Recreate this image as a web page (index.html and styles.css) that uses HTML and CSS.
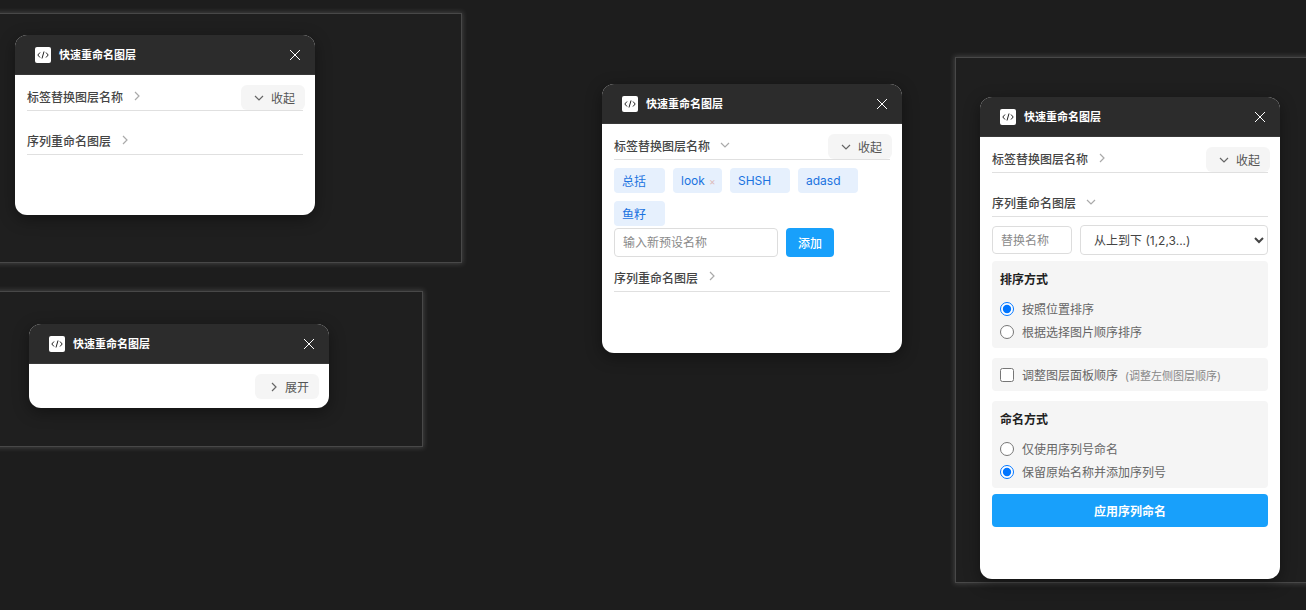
FILE: index.html
```html
<!DOCTYPE html>
<html lang="zh">
<head>
<meta charset="utf-8">
<title>快速重命名图层</title>
<link rel="stylesheet" href="styles.css">
</head>
<body>
<svg class="sprite" width="0" height="0" aria-hidden="true">
  <symbol id="logo" viewBox="0 0 16 16"><path d="M5 5.5 2.8 8 5 10.5M11 5.5 13.2 8 11 10.5M9 4.5 7 11.5" fill="none" stroke="#222" stroke-width="1"/></symbol>
  <symbol id="close" viewBox="0 0 12 12"><path d="M1 1 11 11M11 1 1 11" fill="none" stroke="#fff" stroke-width="1"/></symbol>
  <symbol id="right" viewBox="0 0 8 10"><path d="M2 1 6 5 2 9" fill="none" stroke="currentColor" stroke-width="1.2"/></symbol>
  <symbol id="down" viewBox="0 0 10 8"><path d="M1 2 5 6 9 2" fill="none" stroke="currentColor" stroke-width="1.2"/></symbol>
</svg>

<div class="frame frame-a"></div>
<div class="frame frame-b"></div>
<div class="frame frame-c"></div>

<section class="panel panel-a">
  <header class="head"><span class="logo"><svg width="16" height="16"><use href="#logo"/></svg></span><h1>快速重命名图层</h1><svg class="x" width="12" height="12"><use href="#close"/></svg></header>
  <button class="fold"><svg class="fold-ic" width="10" height="8"><use href="#down"/></svg>收起</button>
  <div class="body">
    <div class="title">标签替换图层名称<svg class="chev" width="8" height="10"><use href="#right"/></svg></div>
    <div class="title">序列重命名图层<svg class="chev" width="8" height="10"><use href="#right"/></svg></div>
  </div>
</section>

<section class="panel panel-b">
  <header class="head"><span class="logo"><svg width="16" height="16"><use href="#logo"/></svg></span><h1>快速重命名图层</h1><svg class="x" width="12" height="12"><use href="#close"/></svg></header>
  <button class="fold"><svg class="fold-ic" width="8" height="10"><use href="#right"/></svg>展开</button>
</section>

<section class="panel panel-c">
  <header class="head"><span class="logo"><svg width="16" height="16"><use href="#logo"/></svg></span><h1>快速重命名图层</h1><svg class="x" width="12" height="12"><use href="#close"/></svg></header>
  <button class="fold"><svg class="fold-ic" width="10" height="8"><use href="#down"/></svg>收起</button>
  <div class="body">
    <div class="title">标签替换图层名称<svg class="chev" width="10" height="8"><use href="#down"/></svg></div>
    <div class="tags">
      <span class="tag w51">总括</span>
      <span class="tag w49">look<i class="del">×</i></span>
      <span class="tag w60">SHSH</span>
      <span class="tag w60">adasd</span>
      <span class="tag w51">鱼籽</span>
    </div>
    <div class="add">
      <input class="field preset" placeholder="输入新预设名称">
      <button class="primary small">添加</button>
    </div>
    <div class="title after-add">序列重命名图层<svg class="chev" width="8" height="10"><use href="#right"/></svg></div>
  </div>
</section>

<section class="panel panel-d">
  <header class="head"><span class="logo"><svg width="16" height="16"><use href="#logo"/></svg></span><h1>快速重命名图层</h1><svg class="x" width="12" height="12"><use href="#close"/></svg></header>
  <button class="fold"><svg class="fold-ic" width="10" height="8"><use href="#down"/></svg>收起</button>
  <div class="body">
    <div class="title">标签替换图层名称<svg class="chev" width="8" height="10"><use href="#right"/></svg></div>
    <div class="title">序列重命名图层<svg class="chev" width="10" height="8"><use href="#down"/></svg></div>
    <div class="seq">
      <input class="field short" placeholder="替换名称">
      <select class="pick"><option>从上到下 (1,2,3...)</option></select>
    </div>
    <div class="group first">
      <div class="group-title">排序方式</div>
      <label class="opt"><input type="radio" name="s" checked>按照位置排序</label>
      <label class="opt"><input type="radio" name="s">根据选择图片顺序排序</label>
    </div>
    <div class="group check">
      <label class="opt"><input type="checkbox">调整图层面板顺序<small>(调整左侧图层顺序)</small></label>
    </div>
    <div class="group">
      <div class="group-title">命名方式</div>
      <label class="opt"><input type="radio" name="n">仅使用序列号命名</label>
      <label class="opt"><input type="radio" name="n" checked>保留原始名称并添加序列号</label>
    </div>
    <button class="primary wide">应用序列命名</button>
  </div>
</section>
</body>
</html>
```
FILE: styles.css
```css
* { box-sizing: border-box; }
html, body { margin: 0; height: 100%; overflow: hidden; }
body {
  position: relative;
  width: 1306px;
  height: 610px;
  background: #1d1d1d;
  font-family: Inter, "Noto Sans CJK SC", sans-serif;
  font-size: 12px;
  color: #333;
}
.sprite { position: absolute; }

.frame {
  position: absolute;
  background: #1f1f1f;
  border: 1px solid #484848;
  box-shadow: 0 0 5px 1px rgba(255, 255, 255, .16);
}
.frame-a { left: -20px; top: 13px; width: 482px; height: 250px; }
.frame-b { left: -20px; top: 291px; width: 443px; height: 156px; }
.frame-c { left: 955px; top: 57px; width: 400px; height: 526px; }

.panel {
  position: absolute;
  width: 300px;
  background: #fff;
  border-radius: 12px;
  overflow: hidden;
  box-shadow: 0 4px 16px rgba(0, 0, 0, .4);
}
.panel-a { left: 15px; top: 35px; height: 180px; }
.panel-b { left: 29px; top: 324px; height: 84px; }
.panel-c { left: 602px; top: 84px; height: 269px; }
.panel-d { left: 980px; top: 97px; height: 482px; }

.head {
  display: flex;
  align-items: center;
  height: 40px;
  padding: 0 14px 0 20px;
  background: #2c2c2c;
  border-bottom: 1px solid #383838;
}
.head h1 {
  flex: 1;
  margin: 0 0 1px 8px;
  font-size: 11px;
  font-weight: 700;
  color: #fff;
}
.logo {
  display: flex;
  align-items: center;
  justify-content: center;
  width: 16px;
  height: 16px;
  background: #fff;
  border-radius: 2px;
}

.fold {
  position: absolute;
  right: 10px;
  top: 50px;
  display: flex;
  align-items: center;
  justify-content: flex-end;
  width: 64px;
  height: 25px;
  padding: 0 10px 0 0;
  border: 0;
  border-radius: 6px;
  background: #f5f5f5;
  font: inherit;
  font-size: 12px;
  color: #555;
}
.fold-ic { margin-right: 7px; color: #666; }

.body { padding: 0 12px; }
.title {
  display: flex;
  align-items: center;
  height: 36px;
  padding-top: 8px;
  border-bottom: 1px solid #e0e0e0;
  font-size: 12px;
  font-weight: 500;
  color: #444;
}
.title + .title { height: 44px; padding-top: 16px; padding-bottom: 0; }
.chev { margin-left: 10px; margin-bottom: 2px; color: #aaa; }

.tags {
  display: flex;
  flex-wrap: wrap;
  gap: 8px;
  margin-top: 8px;
}
.tag {
  display: flex;
  align-items: center;
  height: 25px;
  padding-left: 8px;
  background: #e6f0fd;
  border-radius: 4px;
  font-size: 12px;
  color: #1b73e0;
}
.w51 { width: 51px; }
.w49 { width: 49px; }
.w60 { width: 60px; }
.del { margin-left: 4px; font-style: normal; font-size: 10px; color: #dbb; }

.add { display: flex; gap: 8px; margin-top: 2px; }
.field {
  height: 29px;
  padding: 0 8px;
  border: 1px solid #ddd;
  border-radius: 4px;
  background: #fff;
  font: inherit;
  font-size: 12px;
}
.field::placeholder { color: #8a8a8a; }
.preset { width: 164px; }
.primary {
  border: 0;
  border-radius: 4px;
  background: #18a0fb;
  color: #fff;
  font: inherit;
}
.small { width: 48px; height: 29px; font-size: 12px; font-weight: 500; }
.after-add { height: 35px; padding-top: 6px; }

.seq { display: flex; align-items: center; gap: 8px; margin-top: 8px; }
.short { width: 80px; height: 28px; }
.pick {
  flex: 1;
  min-width: 0;
  height: 30px;
  padding: 0 9px;
  border: 1px solid #ddd;
  border-radius: 4px;
  background: #fff;
  font: inherit;
  font-size: 12px;
  color: #444;
}

.group {
  margin-top: 10px;
  height: 87px;
  padding: 9px 8px 0;
  border-radius: 4px;
  background: #f5f5f5;
}
.group.first { margin-top: 6px; }
.group.check { height: 33px; padding-top: 0; display: flex; align-items: center; }
.group-title { height: 17px; margin-bottom: 10px; font-size: 12px; font-weight: 600; color: #222; }
.opt {
  display: flex;
  align-items: center;
  height: 23px;
  font-size: 12px;
  color: #666;
}
.opt input { width: 14px; height: 14px; margin: 0 8px 0 0; }
.opt small { margin-left: 7px; font-size: 11px; color: #888; }
.wide {
  display: block;
  width: 100%;
  height: 33px;
  margin-top: 6px;
  font-size: 12px;
  font-weight: 600;
}
```
